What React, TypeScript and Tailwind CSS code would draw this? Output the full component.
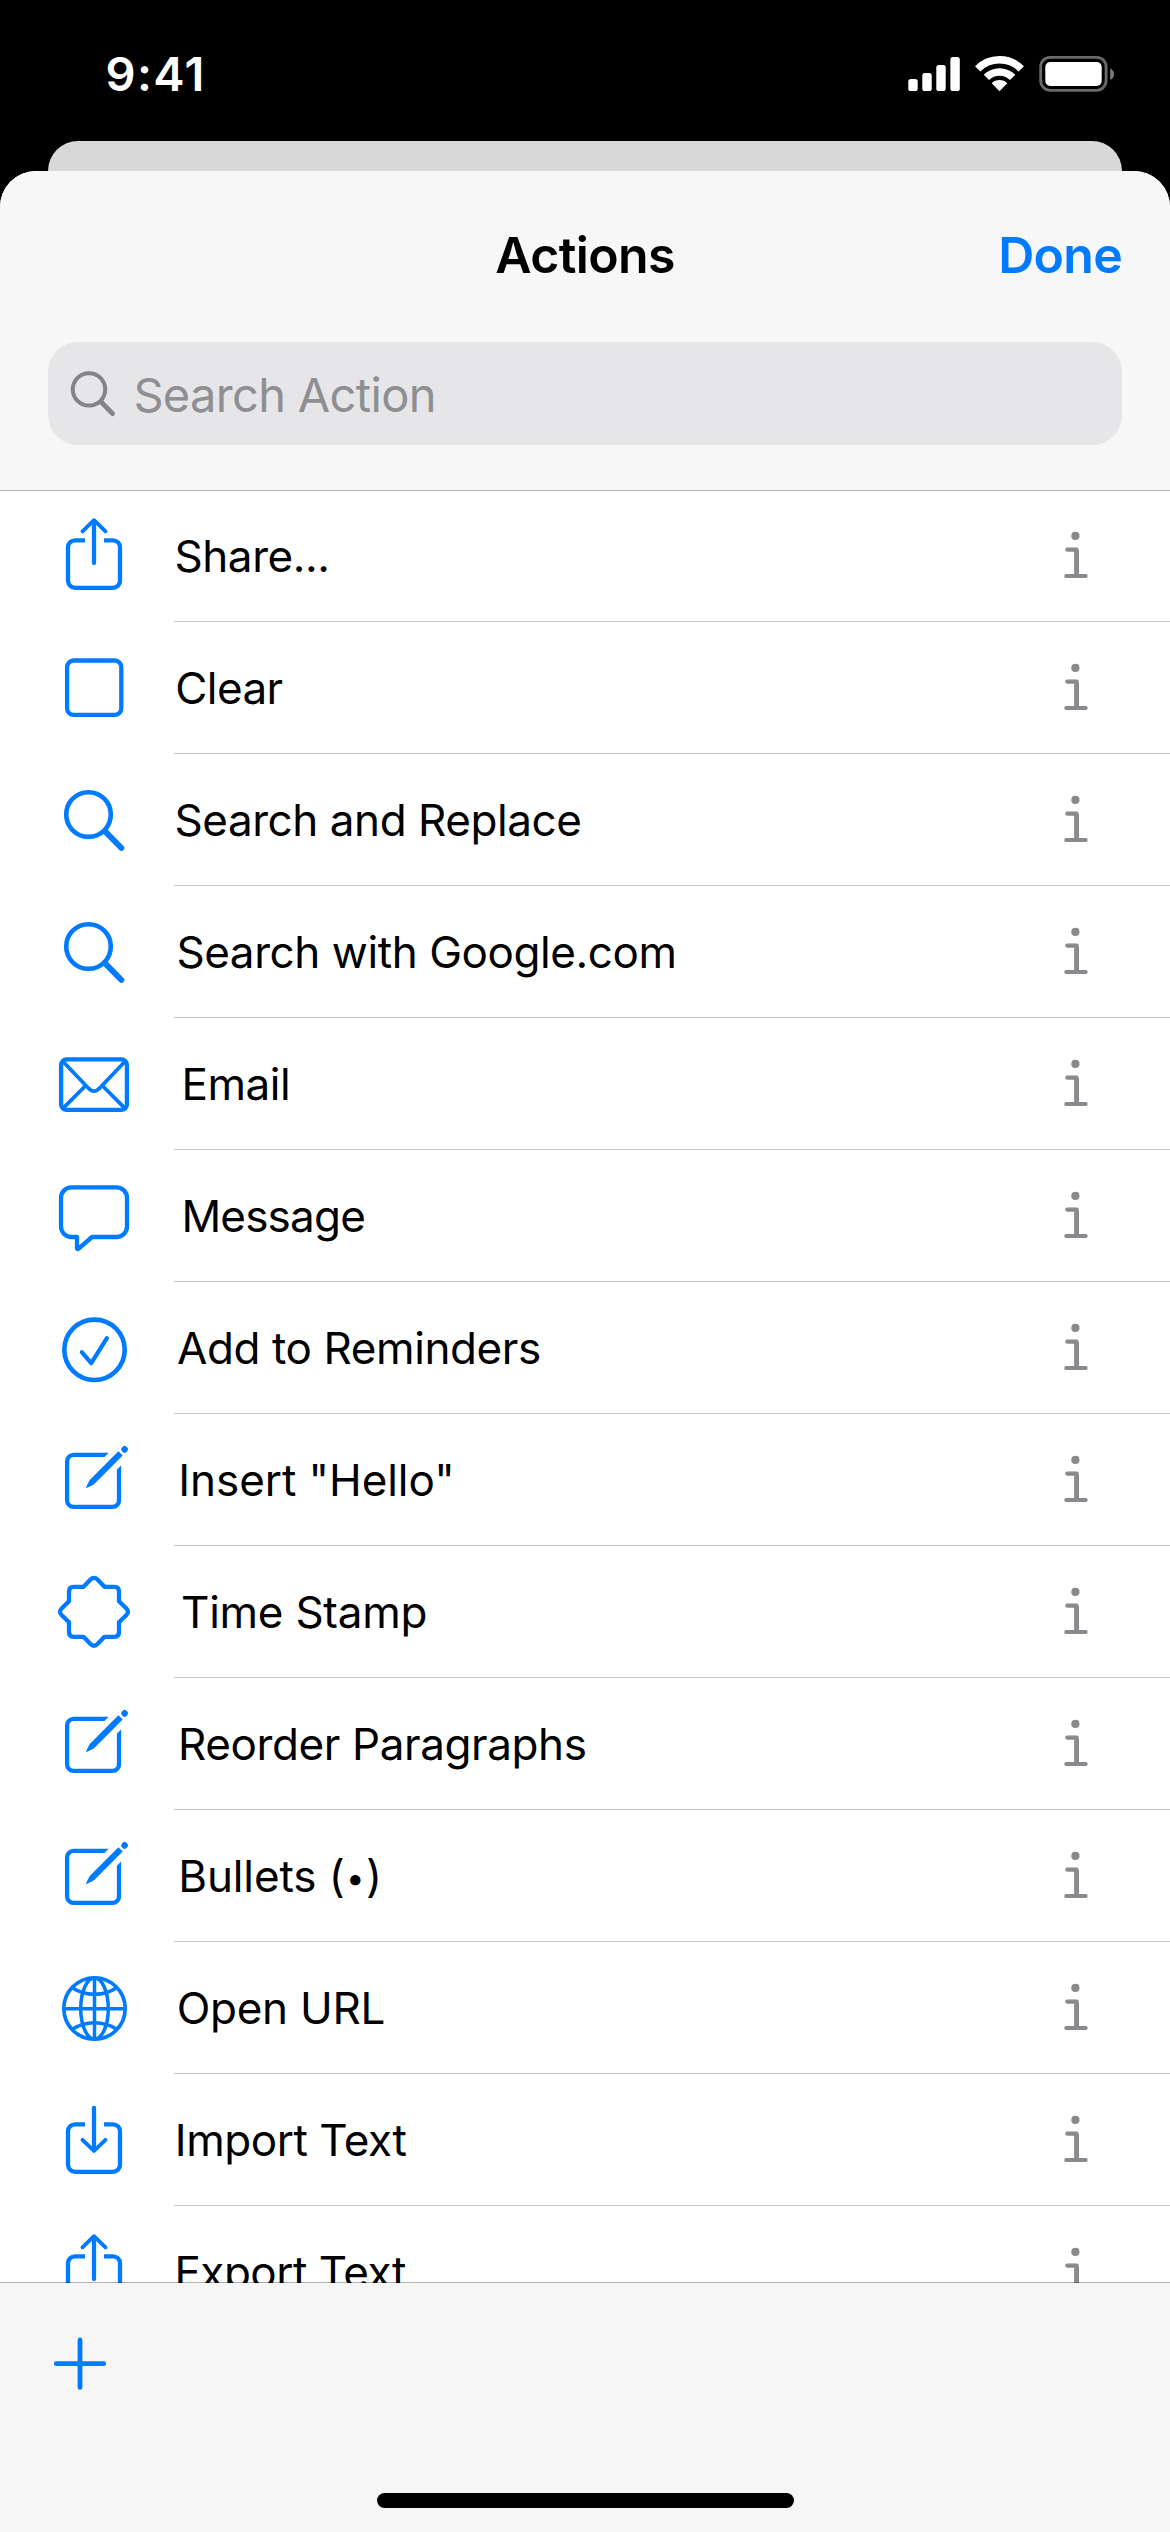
import React from "react";

type IconName =
  | "share"
  | "square"
  | "search"
  | "mail"
  | "message"
  | "check"
  | "compose"
  | "seal"
  | "globe"
  | "import";

const boxWithGap =
  "M36 50.3H26a7 7 0 0 0-7 7V90.8a7 7 0 0 0 7 7H64a7 7 0 0 0 7-7V57.3a7 7 0 0 0-7-7H55";

const glyphs: Record<IconName, React.ReactNode> = {
  share: (
    <>
      <path d={boxWithGap} strokeLinecap="butt" />
      <path d="M45 31V73" />
      <path d="M33.5 41.3L45 30.2L56.5 41.3" strokeWidth="3.9" />
    </>
  ),
  import: (
    <>
      <path d={boxWithGap} strokeLinecap="butt" />
      <path d="M45 33.8V76" />
      <path d="M33.5 65.8L45 76.9L56.5 65.8" strokeWidth="3.9" />
    </>
  ),
  square: <rect x="18.1" y="38.5" width="54.2" height="54.4" rx="6.5" />,
  search: (
    <>
      <circle cx="39.5" cy="60.5" r="22.3" strokeWidth="4.6" />
      <path d="M56.4 77.6L72.4 94" strokeWidth="5.8" />
    </>
  ),
  mail: (
    <>
      <rect x="12.1" y="41.4" width="65.8" height="50.5" rx="5.5" />
      <path d="M14 43.5L39 69.8Q45 76.4 51 69.8L76 43.5" strokeWidth="3.8" />
      <path d="M14 90.3L36.3 68M76 90.3L53.7 68" strokeWidth="3.8" />
    </>
  ),
  message: (
    <path d="M28 87H22.5A10.5 10.5 0 0 1 12 76.5V47.8A10.5 10.5 0 0 1 22.5 37.3H67.5A10.5 10.5 0 0 1 78 47.8V76.5A10.5 10.5 0 0 1 67.5 87H43L29.6 98.6Q28 99.6 28 98Z" />
  ),
  check: (
    <>
      <circle cx="45.5" cy="67.8" r="30.2" strokeWidth="4.6" />
      <path d="M32.8 70.2L42.2 81.2L57.9 56.2" strokeWidth="4.2" />
    </>
  ),
  compose: (
    <>
      <rect x="18.1" y="40.8" width="51.9" height="52.1" rx="6.5" />
      <path
        d="M50 61L82 29"
        className="stroke-white"
        strokeWidth="17.9"
        strokeLinecap="butt"
      />
      <path
        d="M69.4 37.3L73.7 41.6L45.3 70Q43.5 71.3 37.4 74Q36.8 73.8 37.1 73.2Q39.8 67.4 41 65.7Z"
        fill="currentColor"
        stroke="none"
      />
      <rect
        x="-3.2"
        y="-3.2"
        width="6.4"
        height="6.4"
        rx="2.6"
        transform="translate(75.6 35.4) rotate(45)"
        fill="currentColor"
        stroke="none"
      />
    </>
  ),
  seal: (
    <path
      transform="translate(45 65.8)"
      d="M-10.5 -25L-3.5 -32.2Q0 -35.8 3.5 -32.2L10.5 -25H20.5Q25 -25 25 -20.5V-10.5L32.2 -3.5Q35.8 0 32.2 3.5L25 10.5V20.5Q25 25 20.5 25H10.5L3.5 32.2Q0 35.8 -3.5 32.2L-10.5 25H-20.5Q-25 25 -25 20.5V10.5L-32.2 3.5Q-35.8 0 -32.2 -3.5L-25 -10.5V-20.5Q-25 -25 -20.5 -25Z"
    />
  ),
  globe: (
    <g strokeWidth="3.5" strokeLinecap="butt">
      <circle cx="45.5" cy="66.5" r="30.7" strokeWidth="3.7" />
      <ellipse cx="45.5" cy="66.5" rx="13.8" ry="30.5" />
      <path d="M45.5 36V97M15 66.7H76" />
      <path d="M23.4 45.8Q33 52.3 45.5 52.3T67.6 45.8" />
      <path d="M23.4 87.2Q33 80.7 45.5 80.7T67.6 87.2" />
    </g>
  ),
};

function ActionIcon({ name }: { name: IconName }) {
  return (
    <svg
      viewBox="0 0 90 132"
      className="ml-[49px] mr-[35px] h-[132px] w-[90px] shrink-0 text-[#007aff]"
      fill="none"
      stroke="currentColor"
      strokeWidth="4.3"
      strokeLinecap="round"
      strokeLinejoin="round"
    >
      {glyphs[name]}
    </svg>
  );
}

function InfoIcon() {
  return (
    <svg
      viewBox="0 0 45 132"
      className="mr-[70px] h-[132px] w-[45px] shrink-0 text-[#8a8a8e]"
      fill="none"
      stroke="currentColor"
      strokeWidth="4.2"
      strokeLinecap="round"
      strokeLinejoin="round"
    >
      <circle cx="20.4" cy="45.9" r="4.1" fill="currentColor" stroke="none" />
      <path d="M12.2 59.6H21.6V85.5" />
      <path d="M21.6 61V86" strokeWidth="4.8" strokeLinecap="butt" />
      <path d="M11.3 86H30.6" />
    </svg>
  );
}

const actions: { icon: IconName; label: React.ReactNode; text: string }[] = [
  { icon: "share", label: "Share...", text: "pl-[0.5px] tracking-[-0.44px]" },
  { icon: "square", label: "Clear", text: "pl-[1.3px] tracking-[-0.6px]" },
  { icon: "search", label: "Search and Replace", text: "pl-[0.5px] tracking-[-0.44px]" },
  { icon: "search", label: "Search with Google.com", text: "pl-[2.4px] tracking-[-0.42px]" },
  { icon: "mail", label: "Email", text: "pl-[7.5px] tracking-[-0.45px]" },
  { icon: "message", label: "Message", text: "pl-[7.4px] tracking-[-0.8px]" },
  { icon: "check", label: "Add to Reminders", text: "pl-[3px] tracking-[-0.4px]" },
  { icon: "compose", label: 'Insert "Hello"', text: "pl-[4.3px] tracking-[-0.06px]" },
  { icon: "seal", label: "Time Stamp", text: "pl-[7px] tracking-[-0.25px]" },
  { icon: "compose", label: "Reorder Paragraphs", text: "pl-[4px] tracking-[-0.39px]" },
  {
    icon: "compose",
    label: (
      <>
        Bullets (
        <span className="relative -top-[2px] mx-[1.4px] text-[33px] leading-none">•</span>)
      </>
    ),
    text: "pl-[4.2px] tracking-[-0.1px]",
  },
  { icon: "globe", label: "Open URL", text: "pl-[2.7px] tracking-[-0.27px]" },
  { icon: "import", label: "Import Text", text: "pl-[0.8px] tracking-[-0.45px]" },
  { icon: "share", label: "Export Text", text: "pl-[0.4px] tracking-[-0.48px]" },
];

function StatusBar() {
  return (
    <div className="flex h-[141px] shrink-0 justify-between pl-[105.5px] pr-[50px] text-white">
      <div className="mt-[50px] text-[47px] leading-[48px] font-semibold tracking-[1.38px]">
        9:41
      </div>
      <svg viewBox="900 50 220 50" className="mt-[50px] h-[50px] w-[220px]" fill="currentColor">
        <rect x="908.3" y="79" width="9.4" height="12" rx="2.6" />
        <rect x="922.3" y="73" width="9.4" height="18" rx="2.6" />
        <rect x="936.3" y="65" width="9.4" height="26" rx="2.6" />
        <rect x="950.4" y="57" width="9.4" height="34" rx="2.6" />
        <path d="M999.5 91.3L991.7 83.2A11.2 11.2 0 0 1 1007.3 83.2Z" />
        <g fill="none" stroke="currentColor" strokeWidth="7.5">
          <path d="M977.7 68.9A30.6 30.6 0 0 1 1021.3 68.9" />
          <path d="M986.4 77.4A18.5 18.5 0 0 1 1012.6 77.4" />
        </g>
        <rect
          x="1040.7"
          y="57.3"
          width="65.4"
          height="33"
          rx="9.5"
          fill="none"
          stroke="#6b6b6b"
          strokeWidth="2.8"
        />
        <rect x="1045.3" y="62" width="56.4" height="24" rx="5" />
        <path d="M1110.2 68.5Q1114 70 1114 74.2T1110.2 79.7Z" fill="#7a7a7a" />
      </svg>
    </div>
  );
}

export default function App() {
  return (
    <div className="flex h-[2532px] w-[1170px] flex-col overflow-hidden bg-black font-[Inter,sans-serif] text-black">
      <StatusBar />
      <div className="mx-[48px] h-[30px] shrink-0 rounded-t-[30px] bg-[#d8d8d8]" />
      <div className="flex flex-1 flex-col overflow-hidden rounded-t-[36px] bg-white">
        <header className="h-[320px] shrink-0 border-b border-[#b1b1b3] bg-[#f7f7f7] px-[48px]">
          <div className="grid h-[168px] grid-cols-3 items-center text-[50px] leading-[60px] font-semibold">
            <span />
            <h1 className="text-center tracking-[-0.65px]">Actions</h1>
            <button className="text-right tracking-[-0.71px] text-[#007aff]">
              Done
            </button>
          </div>
          <div className="mt-[3px] flex h-[103px] items-center rounded-[30px] bg-[#e6e6e8]">
            <svg
              viewBox="0 0 60 103"
              className="ml-[16px] h-[103px] w-[60px] text-[#848488]"
              fill="none"
              stroke="currentColor"
              strokeLinecap="round"
            >
              <circle cx="25" cy="47.4" r="16.2" strokeWidth="4" />
              <path d="M37.2 60L48.6 71.6" strokeWidth="4.8" />
            </svg>
            <span className="mt-[3px] ml-[9.4px] text-[47px] leading-[58px] tracking-[-0.68px] text-[#8e8e93]">
              Search Action
            </span>
          </div>
        </header>
        <ul className="-mt-px min-h-0 flex-1 overflow-hidden">
          {actions.map((action, i) => (
            <li key={i} className="flex h-[132px] items-center">
              <ActionIcon name={action.icon} />
              <div className="flex h-full flex-1 items-center border-b border-[#c6c6c8]">
                <span className={`flex-1 pt-px text-[44px] leading-[54px] whitespace-nowrap ${action.text}`}>
                  {action.label}
                </span>
                <InfoIcon />
              </div>
            </li>
          ))}
        </ul>
        <footer className="-mt-px flex h-[250px] shrink-0 flex-col justify-between border-t border-black/30 bg-[#f6f6f6] bg-clip-padding">
          <button className="mt-[50px] ml-[50px] w-[60px] text-[#007aff]">
            <svg
              viewBox="0 0 60 60"
              className="h-[60px] w-[60px]"
              stroke="currentColor"
              strokeWidth="4.8"
              strokeLinecap="round"
            >
              <path d="M30 7V54.4M6.3 30.7H53.7" />
            </svg>
          </button>
          <div className="mb-[24px] h-[15px] w-[417px] self-center rounded-full bg-black" />
        </footer>
      </div>
    </div>
  );
}
